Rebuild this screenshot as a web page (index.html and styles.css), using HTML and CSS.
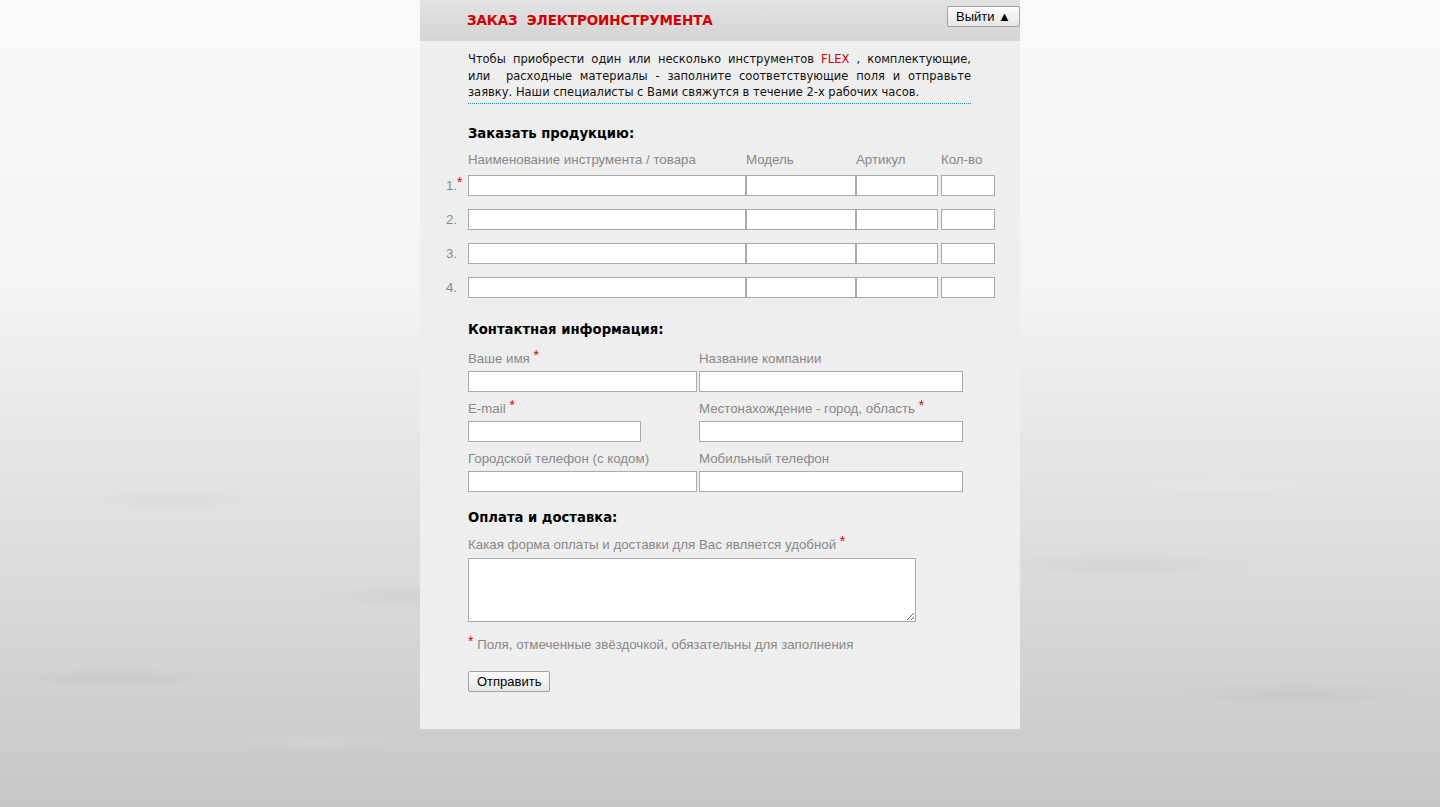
FILE: index.html
```html
<!DOCTYPE html>
<html lang="ru">
<head>
    <meta charset="UTF-8">
    <meta name="viewport" content="width=device-width, initial-scale=1.0">
    <title>Заказ электроинструмента</title>
    <link rel="stylesheet" href="styles.css">
</head>
<body>
    <div class="panel">
        <div class="topbar">
            <h1 class="title">ЗАКАЗ&nbsp; ЭЛЕКТРОИНСТРУМЕНТА</h1>
            <button class="logout">Выйти &#9650;</button>
        </div>

        <div class="content">
            <p class="intro">
                <span class="line">Чтобы приобрести один или несколько инструментов <span class="brand">FLEX</span> , комплектующие,</span>
                <span class="line">или&nbsp; расходные материалы - заполните соответствующие поля и отправьте</span>
                <span class="line last">заявку. Наши специалисты с Вами свяжутся в течение 2-х рабочих часов.</span>
            </p>

            <h2 class="section">Заказать продукцию:</h2>
            <div class="products">
                <span></span>
                <span class="col">Наименование инструмента / товара</span>
                <span class="col">Модель</span>
                <span class="col">Артикул</span>
                <span class="col qty">Кол-во</span>

                <span class="num">1.<sup class="req">*</sup></span>
                <input type="text"><input type="text"><input type="text"><input type="text" class="qty">

                <span class="num">2.</span>
                <input type="text"><input type="text"><input type="text"><input type="text" class="qty">

                <span class="num">3.</span>
                <input type="text"><input type="text"><input type="text"><input type="text" class="qty">

                <span class="num">4.</span>
                <input type="text"><input type="text"><input type="text"><input type="text" class="qty">
            </div>

            <h2 class="section contact">Контактная информация:</h2>
            <div class="contacts">
                <label class="field">
                    <span class="lbl">Ваше имя <span class="req">*</span></span>
                    <input type="text">
                </label>
                <label class="field">
                    <span class="lbl">Название компании</span>
                    <input type="text">
                </label>
                <label class="field">
                    <span class="lbl">E-mail <span class="req">*</span></span>
                    <input type="text" class="short">
                </label>
                <label class="field">
                    <span class="lbl">Местонахождение - город, область <span class="req">*</span></span>
                    <input type="text">
                </label>
                <label class="field">
                    <span class="lbl">Городской телефон (с кодом)</span>
                    <input type="text">
                </label>
                <label class="field">
                    <span class="lbl">Мобильный телефон</span>
                    <input type="text">
                </label>
            </div>

            <h2 class="section payment">Оплата и доставка:</h2>
            <label class="field wide">
                <span class="lbl">Какая форма оплаты и доставки для Вас является удобной <span class="req">*</span></span>
                <textarea></textarea>
            </label>

            <p class="note"><span class="req">*</span> Поля, отмеченные звёздочкой, обязательны для заполнения</p>

            <button class="send">Отправить</button>
        </div>
    </div>
</body>
</html>
```

FILE: styles.css
```css
body {
    margin: 0;
    min-height: 807px;
    font-family: "Liberation Sans", Arial, sans-serif;
    background-color: #d8d8d8;
    background-image:
        radial-gradient(ellipse 90px 10px at 12% 62%, rgba(0,0,0,0.035), transparent),
        radial-gradient(ellipse 120px 12px at 30% 74%, rgba(0,0,0,0.04), transparent),
        radial-gradient(ellipse 110px 10px at 8% 84%, rgba(0,0,0,0.04), transparent),
        radial-gradient(ellipse 140px 12px at 78% 70%, rgba(0,0,0,0.035), transparent),
        radial-gradient(ellipse 130px 12px at 90% 86%, rgba(0,0,0,0.04), transparent),
        radial-gradient(ellipse 100px 10px at 22% 92%, rgba(255,255,255,0.12), transparent),
        radial-gradient(ellipse 120px 10px at 85% 60%, rgba(255,255,255,0.15), transparent),
        linear-gradient(#f9f9f9 0%, #f4f4f4 35%, #e6e6e6 55%, #d6d6d6 78%, #c6c6c6 100%);
    color: #333;
}
.panel {
    width: 600px;
    margin: 0 auto;
    background-color: #eeeeee;
    padding-bottom: 37px;
}
.topbar {
    height: 41px;
    display: flex;
    justify-content: space-between;
    align-items: flex-start;
    background: linear-gradient(#e2e2e2, #d4d4d4);
}
.title {
    margin: 12px 0 0 47px;
    font-family: "DejaVu Sans", Tahoma, sans-serif;
    font-size: 13.5px;
    letter-spacing: -0.1px;
    color: #d10000;
}
.logout {
    margin-top: 6px;
    height: 21px;
    padding: 0 8px;
    font-family: "Liberation Sans", Arial, sans-serif;
    font-size: 13px;
    color: #000;
    background: linear-gradient(#fbfbfb, #e6e6e6);
    border: 1px solid #a0a0a0;
    border-radius: 2px;
}
.content {
    padding: 0 48px;
}
.intro {
    width: 503px;
    margin: 10px 0 0;
    padding-bottom: 2px;
    border-bottom: 1px dotted #0099dd;
    font-family: "DejaVu Sans", Tahoma, sans-serif;
    font-size: 11.5px;
    line-height: 16.5px;
    color: #111;
}
.line {
    display: block;
    text-align: justify;
    text-align-last: justify;
    white-space: nowrap;
}
.line.last {
    text-align-last: left;
}
.brand {
    color: #d10000;
}
.section {
    margin: 22px 0 0;
    font-family: "DejaVu Sans", Tahoma, sans-serif;
    font-size: 13.2px;
    color: #000;
}
.section.contact {
    margin-top: 24px;
}
.section.payment {
    margin-top: 18px;
}
.products {
    display: grid;
    grid-template-columns: 22px 278px 110px 82px 54px;
    row-gap: 13px;
    margin: 11px 0 0 -22px;
}
.products .qty {
    margin-left: 3px;
}
.col {
    font-size: 13.3px;
    color: #888;
    margin-bottom: -5px;
}
.num {
    font-size: 13.3px;
    color: #888;
    line-height: 21px;
    position: relative;
}
.req {
    color: #e00000;
    font-size: 14px;
}
.num .req {
    position: absolute;
    top: -3px;
    left: 11px;
    font-size: 14px;
}
input, textarea {
    box-sizing: border-box;
    height: 21px;
    margin: 0;
    border: 1px solid #a9a9a9;
    background: #fff;
    font-family: "Liberation Sans", Arial, sans-serif;
}
.products input {
    width: 100%;
}
.products input.qty {
    width: 54px;
}
.contacts {
    display: grid;
    grid-template-columns: 229px 264px;
    column-gap: 2px;
    row-gap: 8px;
    margin-top: 13px;
}
.field {
    display: flex;
    flex-direction: column;
    align-items: flex-start;
    gap: 4px;
}
.field.wide {
    margin-top: 11px;
    gap: 5px;
}
.field input {
    width: 100%;
}
.field input.short {
    width: 173px;
}
.lbl {
    font-size: 13.3px;
    color: #888;
    line-height: 17px;
}
.lbl .req {
    position: relative;
    top: -3px;
}
textarea {
    width: 448px;
    height: 64px;
    resize: both;
}
.note {
    margin: 14px 0 0;
    font-size: 13.3px;
    color: #888;
}
.note .req {
    position: relative;
    top: -3px;
}
.send {
    margin-top: 19px;
    height: 21px;
    padding: 0 8px;
    font-family: "Liberation Sans", Arial, sans-serif;
    font-size: 13px;
    color: #000;
    background: linear-gradient(#fbfbfb, #e6e6e6);
    border: 1px solid #a0a0a0;
    border-radius: 2px;
}
```
